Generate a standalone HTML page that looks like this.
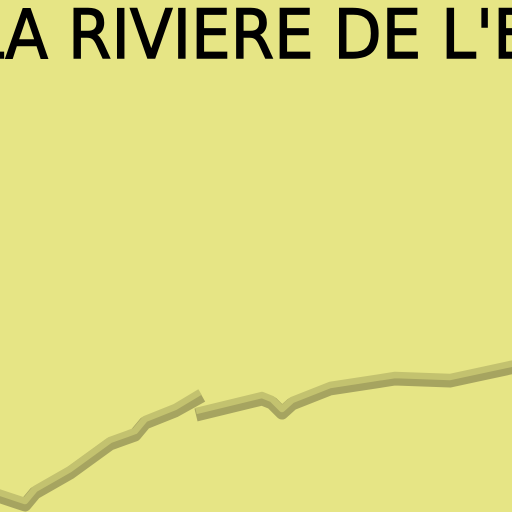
<!DOCTYPE html>
<html><head><style>
html,body{margin:0;padding:0;}
body{width:512px;height:512px;overflow:hidden;background:#e6e585;position:relative;}
.t{position:absolute;left:-31px;top:-4px;font-family:"DejaVu Sans",sans-serif;font-size:68px;color:#000;-webkit-text-stroke:1.4px #000;white-space:nowrap;transform:scaleX(0.92);transform-origin:0 0;line-height:80px;}
svg{position:absolute;left:0;top:0;}
</style></head><body>
<div class="t">LA RIVIERE DE L'E</div>
<svg width="512" height="512" viewBox="0 0 512 512">
<g fill="none" stroke-linejoin="round">
<path d="M-5,495 L25,505 L35,493 L70,473 L110,444 L135,435 L145,423 L175,411 L202,396" stroke="#a6a460" stroke-width="13"/>
<path d="M196,415 L262,399 L272,403 L282,413 L292,404 L330,389 L395,379 L450,381 L515,367" stroke="#a6a460" stroke-width="13"/>
<path d="M-5,491 L25,501 L35,489 L70,469 L110,440 L135,431 L145,419 L175,407 L200,392" stroke="#c3c26f" stroke-width="6.5"/>
<path d="M196,411 L262,395 L272,399 L282,409 L292,400 L330,385 L395,375 L450,377 L515,363" stroke="#c3c26f" stroke-width="6.5"/>
</g>
</svg>
</body></html>
